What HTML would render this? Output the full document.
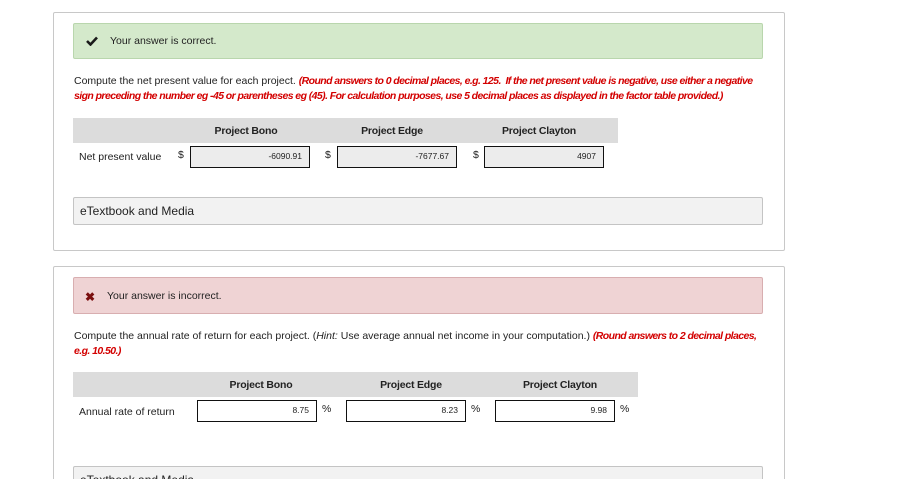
<!DOCTYPE html>
<html><head><style>
*{margin:0;padding:0;box-sizing:border-box}
html,body{width:902px;height:479px;overflow:hidden}
body{background:#fff;position:relative;font-family:"Liberation Sans",sans-serif;font-size:10.5px;color:#222;letter-spacing:0}
.a{position:absolute;white-space:nowrap}
.card{position:absolute;border:1px solid #c8c8c8;border-radius:2px;background:#fff}
.ok{background:#d4e9cb;border:1px solid #b9d6ad;border-radius:2px}
.bad{background:#efd3d4;border:1px solid #d8aeb0;border-radius:2px}
.red{color:#d30000;font-weight:bold;font-style:italic;letter-spacing:-0.58px}
.hdr{background:#dcdcdc}
.th{font-weight:bold;font-size:10.5px;text-align:center;letter-spacing:-0.2px}
.in{position:absolute;border:1.5px solid #111;background:#fff;font-size:8.5px;text-align:right;padding-right:7px;line-height:19px;letter-spacing:0}
.g{background:#ececec}
.et{background:#f2f2f2;border:1px solid #c4c4c4;border-radius:2px}
</style></head><body>
<div class="card" style="left:53px;top:12px;width:732px;height:239px"></div>
<div class="a ok" style="left:73px;top:23px;width:690px;height:36px"></div>
<svg class="a" style="left:86px;top:36px" width="12" height="10" viewBox="0 0 12 10"><path d="M1 5 L4.5 8.5 L11 1.5" stroke="#1a1a1a" stroke-width="2.6" fill="none"/></svg>
<div class="a" style="left:110px;top:35px">Your answer is correct.</div>
<div class="a" style="left:74px;top:75px">Compute the net present value for each project. <span class="red">(Round answers to 0 decimal places, e.g. 125.&nbsp; If the net present value is negative, use either a negative</span></div>
<div class="a red" style="left:74px;top:90px">sign preceding the number eg -45 or parentheses eg (45). For calculation purposes, use 5 decimal places as displayed in the factor table provided.)</div>
<div class="a hdr" style="left:73px;top:118px;width:545px;height:25px"></div>
<div class="a th" style="left:186px;top:125px;width:120px">Project Bono</div>
<div class="a th" style="left:332px;top:125px;width:120px">Project Edge</div>
<div class="a th" style="left:479px;top:125px;width:120px">Project Clayton</div>
<div class="a" style="left:79px;top:151px">Net present value</div>
<div class="a" style="left:178px;top:149px">$</div>
<div class="in g" style="left:190px;top:146px;width:120px;height:22px">-6090.91</div>
<div class="a" style="left:325px;top:149px">$</div>
<div class="in g" style="left:337px;top:146px;width:120px;height:22px">-7677.67</div>
<div class="a" style="left:473px;top:149px">$</div>
<div class="in g" style="left:484px;top:146px;width:120px;height:22px">4907</div>
<div class="a et" style="left:73px;top:197px;width:690px;height:28px"></div>
<div class="a" style="left:80px;top:204px;font-size:12px">eTextbook and Media</div>

<div class="card" style="left:53px;top:266px;width:732px;height:230px"></div>
<div class="a bad" style="left:73px;top:277px;width:690px;height:37px"></div>
<div class="a" style="left:85px;top:290px;color:#7a0f0f;font-size:12px;font-weight:bold">✖</div>
<div class="a" style="left:107px;top:290px">Your answer is incorrect.</div>
<div class="a" style="left:74px;top:330px">Compute the annual rate of return for each project. (<i>Hint:</i> Use average annual net income in your computation.) <span class="red">(Round answers to 2 decimal places,</span></div>
<div class="a red" style="left:74px;top:345px">e.g. 10.50.)</div>
<div class="a hdr" style="left:73px;top:372px;width:565px;height:25px"></div>
<div class="a th" style="left:201px;top:379px;width:120px">Project Bono</div>
<div class="a th" style="left:351px;top:379px;width:120px">Project Edge</div>
<div class="a th" style="left:500px;top:379px;width:120px">Project Clayton</div>
<div class="a" style="left:79px;top:406px">Annual rate of return</div>
<div class="in" style="left:197px;top:400px;width:120px;height:22px">8.75</div>
<div class="a" style="left:322px;top:403px">%</div>
<div class="in" style="left:346px;top:400px;width:120px;height:22px">8.23</div>
<div class="a" style="left:471px;top:403px">%</div>
<div class="in" style="left:495px;top:400px;width:120px;height:22px">9.98</div>
<div class="a" style="left:620px;top:403px">%</div>
<div class="a et" style="left:73px;top:466px;width:690px;height:28px"></div>
<div class="a" style="left:80px;top:473px;font-size:12px">eTextbook and Media</div>
</body></html>
